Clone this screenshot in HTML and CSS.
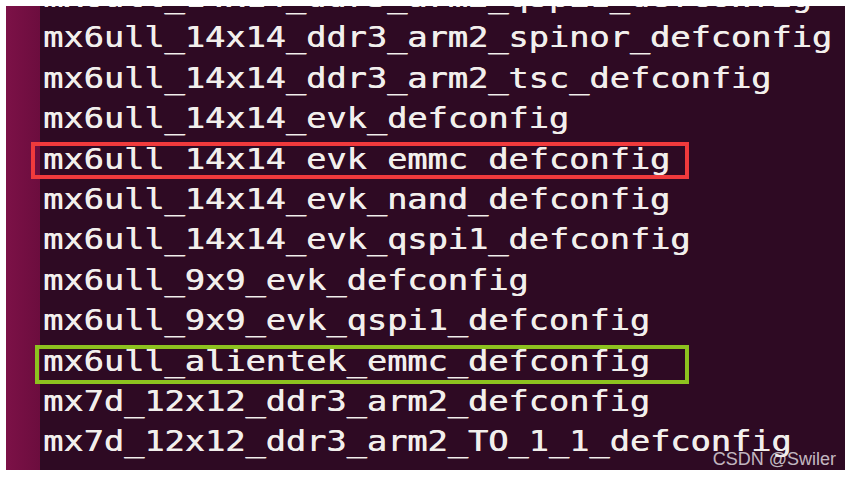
FILE: index.html
```html
<!DOCTYPE html>
<html>
<head>
<meta charset="utf-8">
<link rel="stylesheet" href="styles.css">
</head>
<body>
<div class="screen">
  <div class="sidebar"></div>
  <div class="term">
    <div class="lines">
      <div class="line">mx6ull_14x14_ddr3_arm2_qspi1_defconfig</div>
      <div class="line">mx6ull_14x14_ddr3_arm2_spinor_defconfig</div>
      <div class="line">mx6ull_14x14_ddr3_arm2_tsc_defconfig</div>
      <div class="line">mx6ull_14x14_evk_defconfig</div>
      <div class="line">mx6ull_14x14_evk_emmc_defconfig</div>
      <div class="line">mx6ull_14x14_evk_nand_defconfig</div>
      <div class="line">mx6ull_14x14_evk_qspi1_defconfig</div>
      <div class="line">mx6ull_9x9_evk_defconfig</div>
      <div class="line">mx6ull_9x9_evk_qspi1_defconfig</div>
      <div class="line">mx6ull_alientek_emmc_defconfig</div>
      <div class="line">mx7d_12x12_ddr3_arm2_defconfig</div>
      <div class="line">mx7d_12x12_ddr3_arm2_TO_1_1_defconfig</div>
      <div class="line">mx7d_12x12_lpddr3_arm2_defconfig</div>
    </div>
  </div>
  <div class="box box-red"></div>
  <div class="box box-green"></div>
  <div class="watermark">CSDN @Swiler</div>
</div>
</body>
</html>
```
FILE: styles.css
```css
html, body {
  margin: 0;
  padding: 0;
  background: #ffffff;
}
.screen {
  position: relative;
  margin: 6px;
  width: 839px;
  height: 464px;
  display: flex;
  overflow: hidden;
  background: #2e0a23;
}
.sidebar {
  width: 34px;
  flex: none;
  background: linear-gradient(to right, #7c1147, #6c0d3e);
}
.term {
  flex: 1;
  padding-left: 3px;
  overflow: hidden;
}
.lines {
  margin-top: -28px;
  transform: scaleX(1.2);
  transform-origin: 0 0;
}
.line {
  font-family: "DejaVu Sans Mono", monospace;
  font-size: 28px;
  line-height: 40.4px;
  height: 40.4px;
  white-space: pre;
  color: #f2efec;
  text-shadow: 0.5px 0 0 #f2efec;
}
.box {
  position: absolute;
  box-sizing: border-box;
  border: 4px solid;
}
.box-red {
  left: 25px;
  top: 136px;
  width: 658px;
  height: 37px;
  border-color: #f03a3c;
}
.box-green {
  left: 29px;
  top: 339px;
  width: 654px;
  height: 39px;
  border-color: #8dc21f;
}
.watermark {
  position: absolute;
  right: 9px;
  top: 443px;
  font-family: "Liberation Sans", Arial, sans-serif;
  font-size: 18px;
  line-height: 20px;
  color: rgba(235, 230, 235, 0.8);
}
```
